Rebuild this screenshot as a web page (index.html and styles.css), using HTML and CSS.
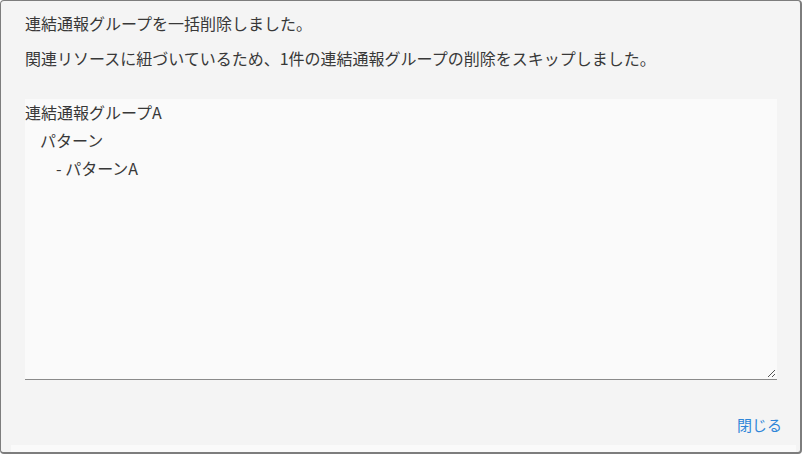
FILE: index.html
```html
<!DOCTYPE html>
<html lang="ja">
<head>
<meta charset="utf-8">
<link rel="stylesheet" href="styles.css">
</head>
<body>
<div class="dialog">
  <div class="content">
    <p class="msg">連結通報グループを一括削除しました。</p>
    <p class="msg">関連リソースに紐づいているため、1件の連結通報グループの削除をスキップしました。</p>
    <div class="box">
      <div class="line">連結通報グループA</div>
      <div class="line lv1">パターン</div>
      <div class="line lv2">- パターンA</div>
      <svg class="grip" width="9" height="9" viewBox="0 0 9 9"><path d="M8 1 L1 8 M8 5 L5 8" stroke="#555" stroke-width="1" fill="none"/></svg>
    </div>
  </div>
  <div class="actions">
    <a class="close" href="#">閉じる</a>
  </div>
  <div class="strip"></div>
</div>
</body>
</html>
```
FILE: styles.css
```css
html, body {
  margin: 0;
  padding: 0;
  background: #ffffff;
}
body {
  font-family: "Noto Sans CJK JP", "Noto Sans", sans-serif;
  font-size: 16px;
  color: #383838;
}
.dialog {
  box-sizing: border-box;
  width: 802px;
  height: 454px;
  border: 1px solid #7d7d7d;
  border-right-width: 2px;
  border-bottom-width: 2px;
  border-radius: 4px;
  background: #f4f4f4;
  display: flex;
  flex-direction: column;
}
.content {
  padding: 11px 23px 0 24px;
}
.msg {
  margin: 0 0 13px 0;
  line-height: 22px;
}
.msg + .msg {
  margin-bottom: 0;
}
.box {
  position: relative;
  margin-top: 30px;
  height: 280px;
  background: #fafafa;
  border-bottom: 1px solid #8a8a8a;
}
.line {
  line-height: 26px;
  height: 28px;
}
.lv1 { padding-left: 15px; }
.lv2 { padding-left: 31px; }
.grip {
  position: absolute;
  right: 1px;
  bottom: 1px;
}
.actions {
  flex: 1;
  display: flex;
  justify-content: flex-end;
  align-items: flex-start;
  padding: 35px 18px 0 0;
}
.close {
  color: #2f86d8;
  font-size: 15px;
  text-decoration: none;
  line-height: 20px;
}
.strip {
  height: 7px;
  margin: 0 4px 0 10px;
  background: #fafafa;
}
```
